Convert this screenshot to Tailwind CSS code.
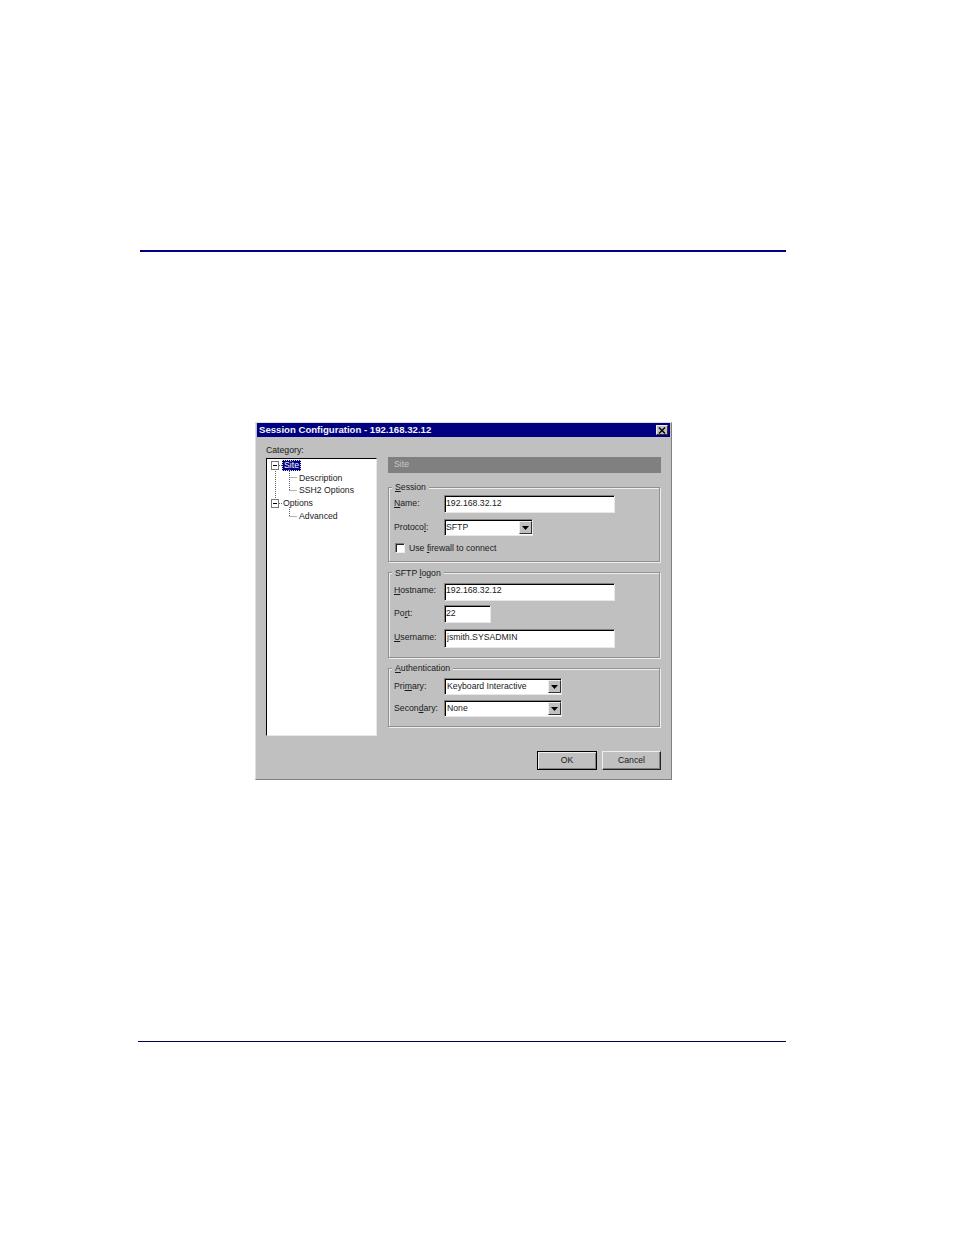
<!DOCTYPE html>
<html lang="en">
<head>
    <meta charset="UTF-8">
    <title>Session Configuration</title>
    <script src="https://cdn.jsdelivr.net/npm/@tailwindcss/browser@4"></script>
</head>
<body class="bg-white font-['Liberation_Sans',Arial,sans-serif] text-[8.7px] leading-none text-[#1a1a1a]">
    <div class="h-[1235px] overflow-hidden pt-[250px]">

        <!-- Top rule -->
        <div class="ml-[140px] h-[2px] w-[646px] bg-[#000080]"></div>

        <!-- Dialog -->
        <div class="ml-[255px] mt-[170px] h-[358px] w-[417px] border border-[#dfdfdf] border-r-[#808080] border-b-[#808080] bg-[#c0c0c0] px-px">
            <div class="flex h-[14px] w-[413px] items-center justify-between bg-[#000080] pl-[2px] pr-[2px] text-[9.6px] font-bold text-[#f4f4f4]">
                <span>Session Configuration - 192.168.32.12</span>
                <span class="flex h-[10px] w-[12px] items-center justify-center border border-[#eee] border-r-[#333] border-b-[#333] bg-[#c0c0c0]">
                    <svg width="8" height="7" viewBox="0 0 8 7"><path d="M1 0.5 L7 6.5 M7 0.5 L1 6.5" stroke="#000" stroke-width="1.4" fill="none"/></svg>
                </span>
            </div>

            <div class="flex">
                <!-- Category tree -->
                <div class="ml-[9px] w-[111px]">
                    <div class="flex h-[21px] items-center pt-[5px]">Category:</div>
                    <div class="relative h-[278px] border border-l-black border-t-black border-r-[#e8e8e8] border-b-[#e8e8e8] bg-white">
                        <svg class="absolute left-0 top-0" width="30" height="64" viewBox="0 0 30 64">
                            <g stroke="#666" stroke-width="1" stroke-dasharray="1 1" fill="none">
                                <path d="M8.5 10 V40"/>
                                <path d="M22.5 8 V31 M22.5 18.5 H30 M22.5 31.5 H30"/>
                                <path d="M22.5 48 V57 M22.5 57.5 H30"/>
                                <path d="M12 6.5 H16 M12 44.5 H16"/>
                            </g>
                            <rect x="4.5" y="2.5" width="7" height="8" fill="#fff" stroke="#777"/>
                            <path d="M6 6.5 H10" stroke="#000"/>
                            <rect x="4.5" y="40.5" width="7" height="8" fill="#fff" stroke="#777"/>
                            <path d="M6 44.5 H10" stroke="#000"/>
                        </svg>
                        <div class="flex h-[13px] items-center pl-[15px]"><span class="border border-dotted border-[#ddd] bg-[#000080] px-px text-white">Site</span></div>
                        <div class="flex h-[12.5px] items-center pl-[32px]">Description</div>
                        <div class="flex h-[12.5px] items-center pl-[32px]">SSH2 Options</div>
                        <div class="flex h-[13px] items-center pl-[16px]">Options</div>
                        <div class="flex h-[12.5px] items-center pl-[32px]">Advanced</div>
                    </div>
                </div>

                <!-- Right column -->
                <div class="ml-[11px] mt-[20px] w-[273px]">
                    <div class="flex h-[16px] items-center bg-[#808080] pb-[2px] pl-[6px] text-[#c8c8c8]">Site</div>

                    <!-- Session -->
                    <div class="relative mt-[14px] h-[75px] w-[272px] border border-[#909090] pl-[5px] pt-[7px] shadow-[inset_1px_1px_0_#eee,1px_1px_0_#eee]">
                        <span class="absolute left-[3px] top-[-5px] bg-[#c0c0c0] px-[3px]"><u>S</u>ession</span>
                        <div class="flex h-[18px] items-center">
                            <span class="w-[50px] pb-[2px]"><u>N</u>ame:</span>
                            <span class="flex h-[18px] w-[171px] items-center border border-[#808080] border-r-[#e8e8e8] border-b-[#e8e8e8] bg-white pb-[2px] pl-[1px] shadow-[inset_1px_1px_0_#000]">192.168.32.12</span>
                        </div>
                        <div class="mt-[6px] flex h-[17px] items-center">
                            <span class="w-[50px]">Protoco<u>l</u>:</span>
                            <span class="flex h-[17px] w-[89px] items-center justify-between border border-[#808080] border-r-[#e8e8e8] border-b-[#e8e8e8] bg-white pl-[1px] shadow-[inset_1px_1px_0_#000]">SFTP
                                <span class="flex h-[13px] w-[13px] items-center justify-center border border-[#eee] border-r-[#333] border-b-[#333] bg-[#c0c0c0]">
                                    <svg width="7" height="4" viewBox="0 0 7 4"><path d="M0 0 H7 L3.5 4 Z" fill="#000"/></svg>
                                </span>
                            </span>
                        </div>
                        <div class="mt-[7px] flex h-[10px] items-center pl-px">
                            <span class="h-[10px] w-[10px] border border-[#808080] border-r-[#eee] border-b-[#eee] bg-white shadow-[inset_1px_1px_0_#222]"></span>
                            <span class="ml-[4px]">Use <u>f</u>irewall to connect</span>
                        </div>
                    </div>

                    <!-- SFTP logon -->
                    <div class="relative mt-[10px] h-[86px] w-[272px] border border-[#909090] pl-[5px] pt-[10px] shadow-[inset_1px_1px_0_#eee,1px_1px_0_#eee]">
                        <span class="absolute left-[3px] top-[-4px] bg-[#c0c0c0] px-[3px]">SFTP <u>l</u>ogon</span>
                        <div class="flex h-[18px] items-center">
                            <span class="w-[50px] pb-[4px]"><u>H</u>ostname:</span>
                            <span class="flex h-[18px] w-[171px] items-center border border-[#808080] border-r-[#e8e8e8] border-b-[#e8e8e8] bg-white pb-[4px] pl-[1px] shadow-[inset_1px_1px_0_#000]">192.168.32.12</span>
                        </div>
                        <div class="mt-[4px] flex h-[18px] items-center">
                            <span class="w-[50px] pb-[2px]">Po<u>r</u>t:</span>
                            <span class="flex h-[18px] w-[47px] items-center border border-[#808080] border-r-[#e8e8e8] border-b-[#e8e8e8] bg-white pb-[2px] pl-[1px] shadow-[inset_1px_1px_0_#000]">22</span>
                        </div>
                        <div class="mt-[6px] flex h-[19px] items-center">
                            <span class="w-[50px] pb-[2px]"><u>U</u>sername:</span>
                            <span class="flex h-[19px] w-[171px] items-center border border-[#808080] border-r-[#e8e8e8] border-b-[#e8e8e8] bg-white pb-[2px] pl-[2px] shadow-[inset_1px_1px_0_#000]">jsmith.SYSADMIN</span>
                        </div>
                    </div>

                    <!-- Authentication -->
                    <div class="relative mt-[10px] h-[59px] w-[272px] border border-[#909090] pl-[5px] pt-[9px] shadow-[inset_1px_1px_0_#eee,1px_1px_0_#eee]">
                        <span class="absolute left-[3px] top-[-5px] bg-[#c0c0c0] px-[3px]"><u>A</u>uthentication</span>
                        <div class="flex h-[17px] items-center">
                            <span class="w-[50px]">Pri<u>m</u>ary:</span>
                            <span class="flex h-[17px] w-[118px] items-center justify-between border border-[#808080] border-r-[#e8e8e8] border-b-[#e8e8e8] bg-white pl-[2px] shadow-[inset_1px_1px_0_#000]">Keyboard Interactive
                                <span class="flex h-[13px] w-[13px] items-center justify-center border border-[#eee] border-r-[#333] border-b-[#333] bg-[#c0c0c0]">
                                    <svg width="7" height="4" viewBox="0 0 7 4"><path d="M0 0 H7 L3.5 4 Z" fill="#000"/></svg>
                                </span>
                            </span>
                        </div>
                        <div class="mt-[5px] flex h-[17px] items-center">
                            <span class="w-[50px]">Secon<u>d</u>ary:</span>
                            <span class="flex h-[17px] w-[118px] items-center justify-between border border-[#808080] border-r-[#e8e8e8] border-b-[#e8e8e8] bg-white pl-[2px] shadow-[inset_1px_1px_0_#000]">None
                                <span class="flex h-[13px] w-[13px] items-center justify-center border border-[#eee] border-r-[#333] border-b-[#333] bg-[#c0c0c0]">
                                    <svg width="7" height="4" viewBox="0 0 7 4"><path d="M0 0 H7 L3.5 4 Z" fill="#000"/></svg>
                                </span>
                            </span>
                        </div>
                    </div>

                    <!-- Buttons -->
                    <div class="mt-[24px] flex justify-end gap-[5px]">
                        <button class="h-[19px] w-[60px] border border-black bg-[#c0c0c0] shadow-[inset_1px_1px_0_#eee,inset_-1px_-1px_0_#808080]">OK</button>
                        <button class="h-[19px] w-[59px] border border-[#eee] border-r-[#222] border-b-[#222] bg-[#c0c0c0] shadow-[inset_-1px_-1px_0_#808080]">Cancel</button>
                    </div>
                </div>
            </div>
        </div>

        <!-- Bottom rule -->
        <div class="ml-[138px] mt-[261px] h-[1px] w-[648px] bg-[#000050]"></div>
    </div>
</body>
</html>
